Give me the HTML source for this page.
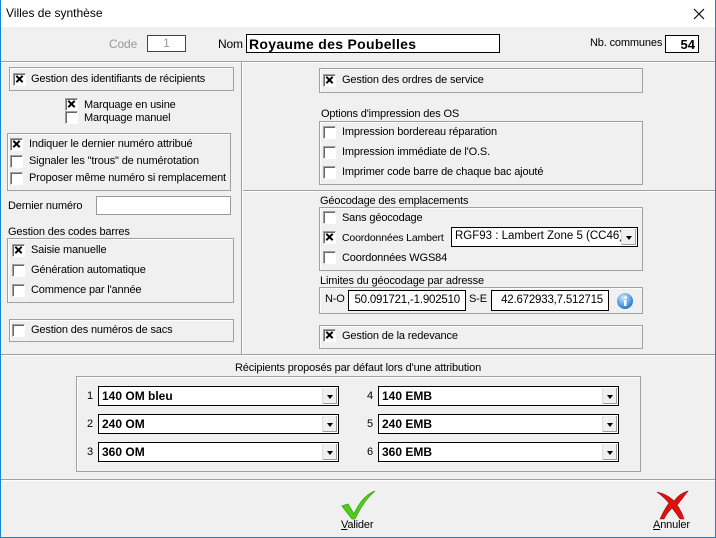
<!DOCTYPE html><html><head><meta charset="utf-8"><style>
*{margin:0;padding:0;box-sizing:border-box}
body{width:716px;height:538px;background:#f0f0f0;font:11px "Liberation Sans",sans-serif;color:#000;position:relative;overflow:hidden}
.a{position:absolute;white-space:nowrap;letter-spacing:-0.15px;margin-top:1px}
.win{position:absolute;left:0;top:0;width:716px;height:538px;border:1px solid #1883d7;border-top:none}
.title{position:absolute;left:0;top:0;width:716px;height:27px;background:#fff}
.g{position:absolute;border:1px solid #a0a0a0;box-shadow:inset 1px 1px #fff}
.cb{position:absolute;width:13px;height:13px;background:#fff;border-top:1px solid #a0a0a0;border-left:1px solid #a0a0a0;border-right:1px solid #fff;border-bottom:1px solid #fff;box-shadow:inset 1px 1px #696969}
.x:before,.x:after{content:"";position:absolute;left:1px;top:4px;width:9px;height:2px;background:#000;transform:rotate(45deg)}
.x:after{transform:rotate(-45deg)}
.in{position:absolute;background:#fff;border:1px solid #000}
.hl{position:absolute;height:2px;border-top:1px solid #a0a0a0;border-bottom:1px solid #fff}
.sel{position:absolute;background:#fff;border:1px solid #000;font:bold 12px "Liberation Sans";padding:2px 0 0 3px;overflow:hidden;white-space:nowrap}
.sel i{position:absolute;right:1px;top:1px;bottom:1px;width:15px;background:#f0f0f0;border-left:1px solid #ddd;box-shadow:inset -1px -1px #a0a0a0}
.sel i:after{content:"";position:absolute;left:4px;top:7px;border:3.5px solid transparent;border-top:4px solid #000}
</style></head><body>
<div class="title"></div>
<div class="win"></div>
<div class="a" style="left:6px;top:5px;font-size:12px;letter-spacing:0">Villes de synthèse</div>
<svg class="a" style="left:693px;top:7px" width="12" height="12"><path d="M1 1L11 11M11 1L1 11" stroke="#000" stroke-width="1.1"/></svg>

<div class="a" style="left:109px;top:36px;color:#999;font-size:12px">Code</div>
<div class="in" style="left:147px;top:35px;width:39px;height:17px;border-color:#444;color:#999;font-size:12px;text-align:center">1</div>
<div class="a" style="left:218px;top:36px;font-size:12px">Nom</div>
<div class="in" style="left:246px;top:34px;width:254px;height:19px;font:bold 14px 'Liberation Sans';padding:1px 2px;letter-spacing:0.3px">Royaume des Poubelles</div>
<div class="a" style="left:590px;top:36px;font-size:11px">Nb. communes</div>
<div class="in" style="left:665px;top:35px;width:34px;height:18px;font:bold 13px 'Liberation Sans';text-align:right;padding:1px 3px">54</div>

<div class="hl" style="left:1px;top:61px;width:714px"></div>
<div style="position:absolute;left:241px;top:62px;width:2px;height:293px;border-left:1px solid #a0a0a0;border-right:1px solid #fff"></div>
<div class="hl" style="left:243px;top:190px;width:472px"></div>
<div class="hl" style="left:1px;top:354px;width:714px"></div>
<div class="hl" style="left:1px;top:479px;width:714px"></div>

<!-- left -->
<div class="g" style="left:9px;top:67px;width:225px;height:24px"></div>
<div class="cb x" style="left:13px;top:73px"></div><div class="a" style="left:31px;top:72px">Gestion des identifiants de récipients</div>
<div class="cb x" style="left:65px;top:98px"></div><div class="a" style="left:84px;top:98px">Marquage en usine</div>
<div class="cb" style="left:65px;top:111px"></div><div class="a" style="left:84px;top:111px">Marquage manuel</div>
<div class="g" style="left:7px;top:133px;width:224px;height:58px"></div>
<div class="cb x" style="left:10px;top:138px"></div><div class="a" style="left:29px;top:137px">Indiquer le dernier numéro attribué</div>
<div class="cb" style="left:10px;top:155px"></div><div class="a" style="left:29px;top:154px">Signaler les "trous" de numérotation</div>
<div class="cb" style="left:10px;top:172px"></div><div class="a" style="left:29px;top:171px">Proposer même numéro si remplacement</div>
<div class="a" style="left:8px;top:199px">Dernier numéro</div>
<div class="in" style="left:96px;top:196px;width:135px;height:19px;border-color:#999"></div>
<div class="a" style="left:8px;top:225px">Gestion des codes barres</div>
<div class="g" style="left:7px;top:238px;width:227px;height:65px"></div>
<div class="cb x" style="left:12px;top:244px"></div><div class="a" style="left:31px;top:243px">Saisie manuelle</div>
<div class="cb" style="left:12px;top:264px"></div><div class="a" style="left:31px;top:263px">Génération automatique</div>
<div class="cb" style="left:12px;top:284px"></div><div class="a" style="left:31px;top:283px">Commence par l'année</div>
<div class="g" style="left:9px;top:319px;width:225px;height:23px"></div>
<div class="cb" style="left:12px;top:324px"></div><div class="a" style="left:31px;top:323px">Gestion des numéros de sacs</div>

<!-- right -->
<div class="g" style="left:319px;top:68px;width:324px;height:25px"></div>
<div class="cb x" style="left:323px;top:74px"></div><div class="a" style="left:342px;top:73px">Gestion des ordres de service</div>
<div class="a" style="left:321px;top:107px">Options d'impression des OS</div>
<div class="g" style="left:319px;top:121px;width:324px;height:64px"></div>
<div class="cb" style="left:323px;top:126px"></div><div class="a" style="left:342px;top:125px">Impression bordereau réparation</div>
<div class="cb" style="left:323px;top:146px"></div><div class="a" style="left:342px;top:145px">Impression immédiate de l'O.S.</div>
<div class="cb" style="left:323px;top:166px"></div><div class="a" style="left:342px;top:165px">Imprimer code barre de chaque bac ajouté</div>
<div class="a" style="left:320px;top:194px">Géocodage des emplacements</div>
<div class="g" style="left:319px;top:207px;width:324px;height:64px"></div>
<div class="cb" style="left:323px;top:211px"></div><div class="a" style="left:342px;top:211px">Sans géocodage</div>
<div class="cb x" style="left:323px;top:231px"></div><div class="a" style="left:342px;top:231px;font-size:10.5px">Coordonnées Lambert</div>
<div class="sel" style="left:451px;top:227px;width:187px;height:20px;font:11.5px 'Liberation Sans'">RGF93 : Lambert Zone 5 (CC46)<i></i></div>
<div class="cb" style="left:323px;top:251px"></div><div class="a" style="left:342px;top:251px">Coordonnées WGS84</div>
<div class="a" style="left:320px;top:274px">Limites du géocodage par adresse</div>
<div class="g" style="left:319px;top:287px;width:324px;height:27px"></div>
<div class="a" style="left:325px;top:292px">N-O</div>
<div class="in" style="left:348px;top:290px;width:118px;height:21px;font-size:11.5px;text-align:right;padding:3px 5px;letter-spacing:-0.2px">50.091721,-1.902510</div>
<div class="a" style="left:469px;top:292px">S-E</div>
<div class="in" style="left:491px;top:290px;width:118px;height:21px;font-size:11.5px;text-align:right;padding:3px 5px;letter-spacing:-0.2px">42.672933,7.512715</div>
<svg class="a" style="left:616px;top:291px" width="18" height="18"><defs><radialGradient id="r" cx="40%" cy="30%" r="70%"><stop offset="0" stop-color="#cfe8ff"/><stop offset="1" stop-color="#1f78d0"/></radialGradient></defs><circle cx="9" cy="9" r="8" fill="url(#r)"/><rect x="8" y="8" width="2.5" height="6" fill="#fff"/><circle cx="9.6" cy="5.5" r="1.4" fill="#fff"/></svg>
<div class="g" style="left:319px;top:325px;width:324px;height:24px"></div>
<div class="cb x" style="left:323px;top:329px"></div><div class="a" style="left:342px;top:329px">Gestion de la redevance</div>

<!-- bottom -->
<div class="a" style="left:0;width:716px;text-align:center;top:361px">Récipients proposés par défaut lors d'une attribution</div>
<div class="g" style="left:76px;top:376px;width:565px;height:96px"></div>
<div class="a" style="left:87px;top:389px">1</div><div class="sel" style="left:98px;top:386px;width:241px;height:20px">140 OM bleu<i></i></div>
<div class="a" style="left:87px;top:417px">2</div><div class="sel" style="left:98px;top:414px;width:241px;height:20px">240 OM<i></i></div>
<div class="a" style="left:87px;top:445px">3</div><div class="sel" style="left:98px;top:442px;width:241px;height:20px">360 OM<i></i></div>
<div class="a" style="left:367px;top:389px">4</div><div class="sel" style="left:378px;top:386px;width:241px;height:20px">140 EMB<i></i></div>
<div class="a" style="left:367px;top:417px">5</div><div class="sel" style="left:378px;top:414px;width:241px;height:20px">240 EMB<i></i></div>
<div class="a" style="left:367px;top:445px">6</div><div class="sel" style="left:378px;top:442px;width:241px;height:20px">360 EMB<i></i></div>

<svg class="a" style="left:340px;top:487px" width="36" height="32"><path d="M2 18 L8 16 L14 26 Q22 8 35 3 Q24 12 15 31 L12 31 Z" fill="#4fcf1a" stroke="#38a010" stroke-width="0.8"/></svg>
<div class="a" style="left:341px;top:518px"><u>V</u>alider</div>
<svg class="a" style="left:655px;top:487px" width="36" height="32"><path d="M2 4 Q12 6 19 13 Q25 5 33 3 Q28 10 22 17 Q27 24 29 31 L25 31 Q21 25 17 20 Q11 26 9 31 L5 31 Q9 22 14 15 Q9 9 2 4Z" fill="#e01010" stroke="#a00000" stroke-width="0.6"/></svg>
<div class="a" style="left:653px;top:518px"><u>A</u>nnuler</div>
</body></html>
